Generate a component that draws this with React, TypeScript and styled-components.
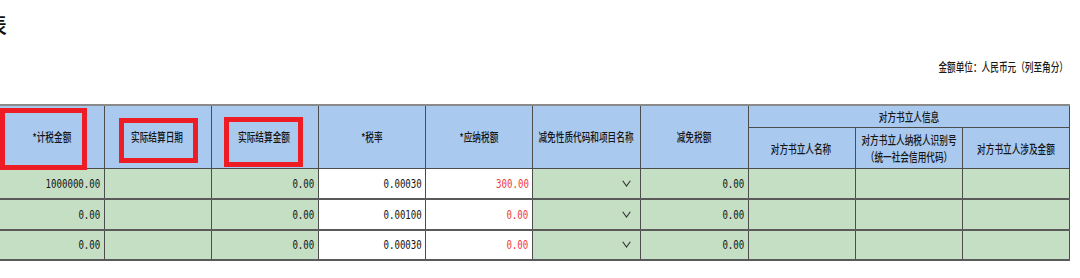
import React from 'react';
import styled, { createGlobalStyle } from 'styled-components';

const GlobalStyle = createGlobalStyle`
  html, body {
    margin: 0;
    padding: 0;
    background: #ffffff;
    overflow: hidden;
  }
  body {
    font-family: "Noto Sans CJK SC", "Noto Sans", sans-serif;
    color: #1a1a1a;
  }
`;

const Page = styled.div`
  width: 1080px;
  height: 278px;
  padding-top: 8px;
  box-sizing: border-box;
  overflow: hidden;
`;

const Title = styled.h1`
  margin: 0 0 0 -15px;
  font-size: 22px;
  line-height: 30px;
  font-weight: 500;
  color: #111;
`;

const UnitRow = styled.div`
  display: flex;
  justify-content: flex-end;
  width: 1068px;
  margin-top: 21px;
  height: 16px;
  font-size: 12px;
  line-height: 16px;
  font-weight: 500;
`;

const Squeeze = styled.span<{ $origin?: string }>`
  display: inline-block;
  white-space: nowrap;
  transform: scaleX(0.72);
  transform-origin: ${(p) => p.$origin || 'center'};
`;

// centers the squeezed label even when its unscaled width is wider than the cell
const Center = styled.div`
  display: flex;
  justify-content: center;
  align-items: center;
  overflow: visible;
`;

const Table = styled.table`
  margin-top: 29px;
  width: 1069px;
  table-layout: fixed;
  border-collapse: collapse;
  border-top: 2px solid #8a8a8a;
`;

const HeadCell = styled.th<{ $h?: number }>`
  position: relative;
  background: #a9c9ef;
  border: 1px solid #4c4c4c;
  border-top: 2px solid #8a8a8a;
  height: ${(p) => (p.$h ? `${p.$h}px` : 'auto')};
  padding: 0;
  font-size: 12px;
  line-height: 16px;
  font-weight: 500;
  color: #151515;
  text-align: center;
  vertical-align: middle;
  &:first-child {
    border-left: none;
  }
`;

const SubHeadCell = styled(HeadCell)`
  border-top: 1px solid #4c4c4c;
  height: 40px;
  line-height: 17px;
`;

const Mark = styled.span<{ $l: number; $t: number; $w: number; $h: number }>`
  position: absolute;
  left: ${(p) => p.$l}px;
  top: ${(p) => p.$t}px;
  width: ${(p) => p.$w}px;
  height: ${(p) => p.$h}px;
  border: 5px solid #ee1c25;
  box-sizing: border-box;
  pointer-events: none;
`;

const Row = styled.tr<{ $h: number }>`
  height: ${(p) => p.$h}px;
`;

const Cell = styled.td<{ $white?: boolean; $red?: boolean }>`
  background: ${(p) => (p.$white ? '#ffffff' : '#c4dfc3')};
  border: 1px solid #4c4c4c;
  border-bottom: 2px solid #5a5a5a;
  padding: 0 3px 0 0;
  font-family: "DejaVu Sans Mono", "Liberation Mono", monospace;
  font-size: 13px;
  color: ${(p) => (p.$red ? '#f03a3a' : '#151515')};
  text-align: right;
  vertical-align: middle;
  &:first-child {
    border-left: none;
  }
`;

const Num = styled(Squeeze)`
  transform: scaleX(0.7);
`;

const SelectCell = styled(Cell)`
  padding-right: 9px;
`;

const Chevron = () => (
  <svg width="9" height="7" viewBox="0 0 9 7" style={{ display: 'block', marginLeft: 'auto' }}>
    <polyline points="0.7,0.8 4.5,6 8.3,0.8" fill="none" stroke="#333" strokeWidth="1.1" />
  </svg>
);

const widths = [104, 107, 107, 107, 107, 108, 108, 107, 107, 107];

const rows = [
  { base: '1000000.00', settle: '0.00', rate: '0.00030', due: '300.00', relief: '0.00' },
  { base: '0.00', settle: '0.00', rate: '0.00100', due: '0.00', relief: '0.00' },
  { base: '0.00', settle: '0.00', rate: '0.00030', due: '0.00', relief: '0.00' },
];

const Label = ({ children }: { children: React.ReactNode }) => (
  <Center>
    <Squeeze>{children}</Squeeze>
  </Center>
);

export default function App() {
  return (
    <Page>
      <GlobalStyle />
      <Title>表</Title>
      <UnitRow>
        <Squeeze $origin="right">金额单位：人民币元（列至角分）</Squeeze>
      </UnitRow>
      <Table>
        <colgroup>
          {widths.map((w, i) => (
            <col key={i} style={{ width: w }} />
          ))}
        </colgroup>
        <thead>
          <tr>
            <HeadCell rowSpan={2}>
              <Label>*计税金额</Label>
              <Mark $l={0} $t={2} $w={87} $h={62} />
            </HeadCell>
            <HeadCell rowSpan={2}>
              <Label>实际结算日期</Label>
              <Mark $l={14} $t={12} $w={79} $h={45} />
            </HeadCell>
            <HeadCell rowSpan={2}>
              <Label>实际结算金额</Label>
              <Mark $l={12} $t={11} $w={79} $h={50} />
            </HeadCell>
            <HeadCell rowSpan={2}>
              <Label>*税率</Label>
            </HeadCell>
            <HeadCell rowSpan={2}>
              <Label>*应纳税额</Label>
            </HeadCell>
            <HeadCell rowSpan={2}>
              <Label>减免性质代码和项目名称</Label>
            </HeadCell>
            <HeadCell rowSpan={2}>
              <Label>减免税额</Label>
            </HeadCell>
            <HeadCell colSpan={3} $h={21}>
              <Label>对方书立人信息</Label>
            </HeadCell>
          </tr>
          <tr>
            <SubHeadCell>
              <Label>对方书立人名称</Label>
            </SubHeadCell>
            <SubHeadCell>
              <Label>
                对方书立人纳税人识别号
                <br />
                （统一社会信用代码）
              </Label>
            </SubHeadCell>
            <SubHeadCell>
              <Label>对方书立人涉及金额</Label>
            </SubHeadCell>
          </tr>
        </thead>
        <tbody>
          {rows.map((r, i) => (
            <Row key={i} $h={i === 1 ? 31 : 30}>
              <Cell>
                <Num $origin="right">{r.base}</Num>
              </Cell>
              <Cell />
              <Cell>
                <Num $origin="right">{r.settle}</Num>
              </Cell>
              <Cell $white>
                <Num $origin="right">{r.rate}</Num>
              </Cell>
              <Cell $white $red>
                <Num $origin="right">{r.due}</Num>
              </Cell>
              <SelectCell>
                <Chevron />
              </SelectCell>
              <Cell>
                <Num $origin="right">{r.relief}</Num>
              </Cell>
              <Cell />
              <Cell />
              <Cell />
            </Row>
          ))}
        </tbody>
      </Table>
    </Page>
  );
}
